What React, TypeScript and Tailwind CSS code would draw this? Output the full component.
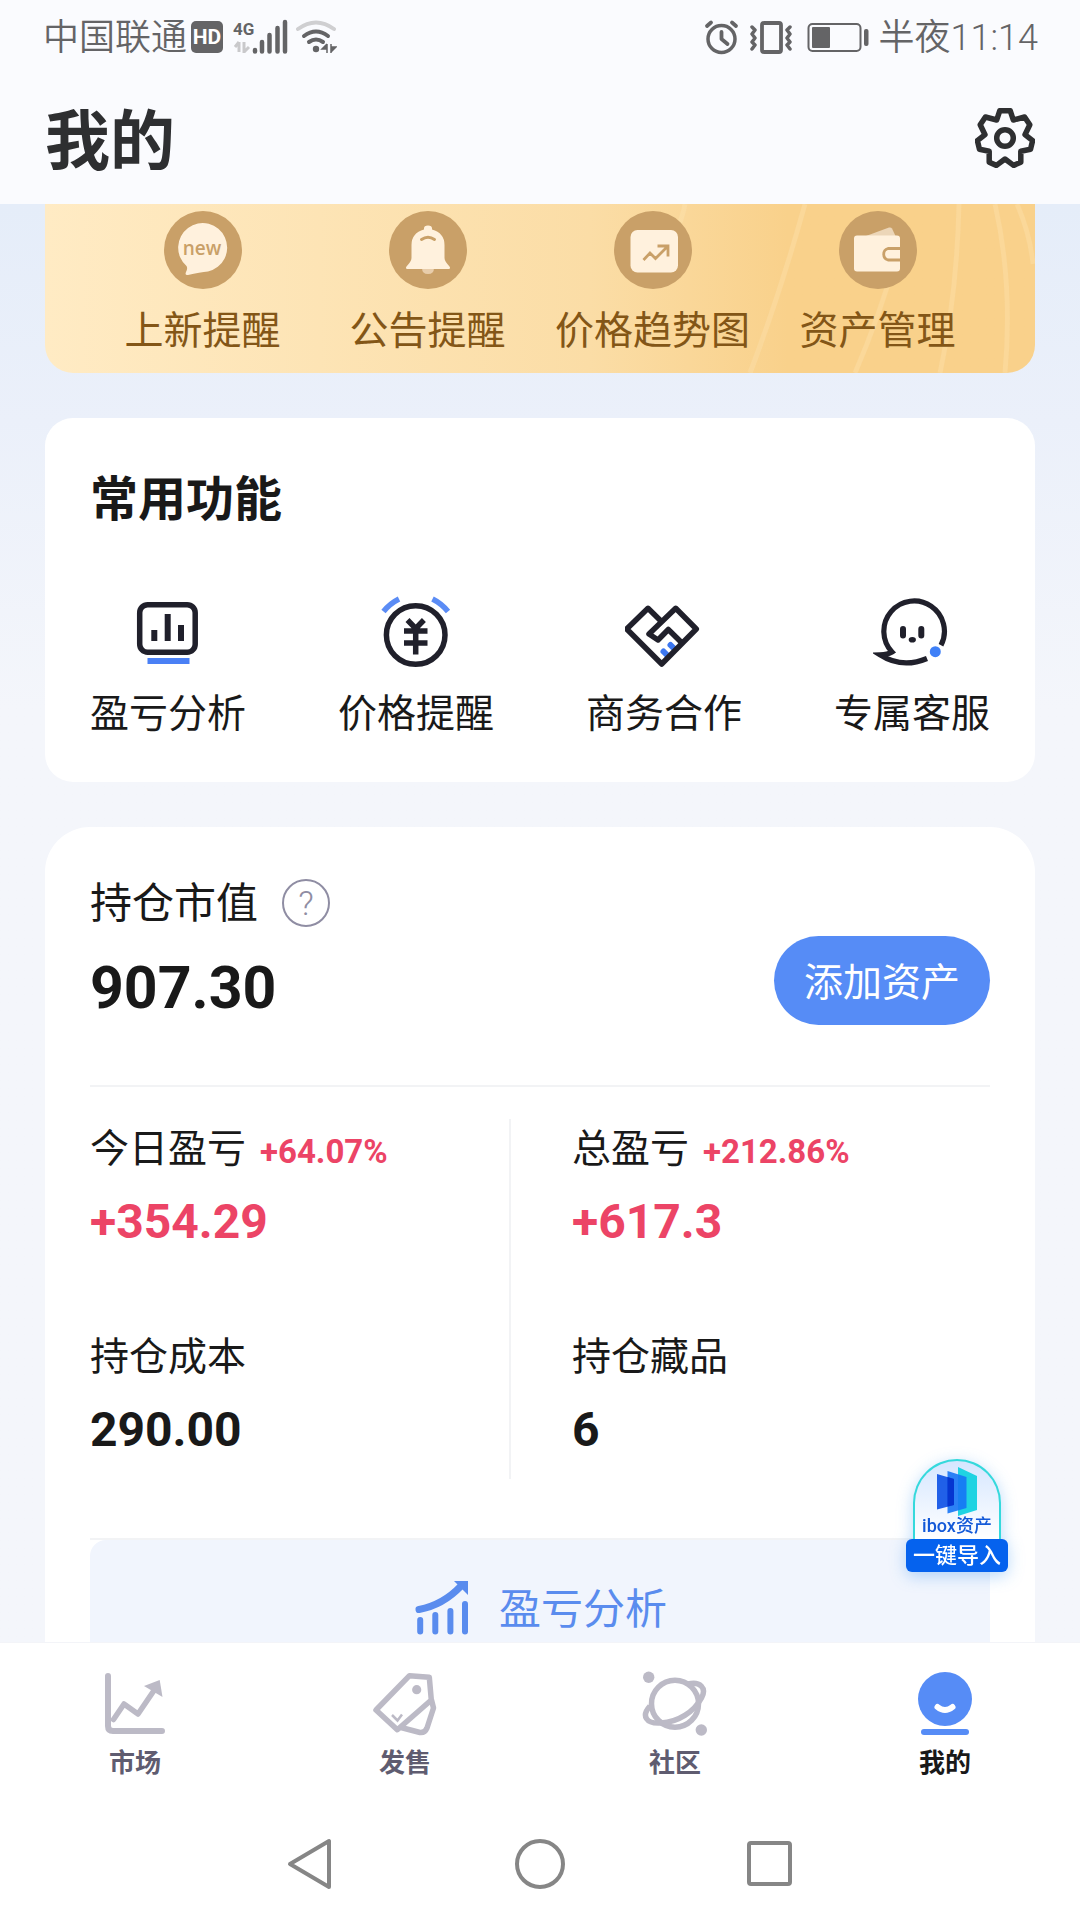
import React from "react";

const Svg = ({ box, className, children }: { box: string; className: string; children: React.ReactNode }) => (
  <svg viewBox={box} className={`shrink-0 ${className}`} fill="none" aria-hidden="true">
    {children}
  </svg>
);

function StatusBar() {
  return (
    <div className="flex h-[74px] items-center justify-between pl-[43px] pr-[42px] text-[36px] font-[350] text-[#646466]">
      <div className="flex items-center">
        <span className="pt-[2px]">中国联通</span>
        <span className="ml-[4px] flex size-[32px] items-center justify-center rounded-[5px] bg-[#646466] text-[21px] font-bold leading-none text-white">
          HD
        </span>
        <Svg box="233 18 57 36" className="ml-[9px] h-[36px] w-[57px]">
          <text x="234" y="34" fontSize="17" fontWeight="700" fill="#646466">4G</text>
          <path d="M240 41v10M240 41l-4 5M245 41v11M245 51l5-5" stroke="#c9c9cb" strokeWidth="3" />
          <path d="M256 49v1.500M263 41v9.500M270.500 34v16.500M278.500 27v23.500M286 21v29.500" stroke="#646466" strokeWidth="4.500" strokeLinecap="round" />
        </Svg>
        <Svg box="296 18 42 36" className="ml-[6px] h-[36px] w-[42px]">
          <path d="M299 28Q317 15 335 28" stroke="#cfcfd1" strokeWidth="4" strokeLinecap="round" />
          <path d="M305 35Q317 26 329 35M310 41Q317 36 324 41" stroke="#646466" strokeWidth="4" strokeLinecap="round" />
          <circle cx="317" cy="48" r="3.200" fill="#646466" />
          <path d="M328 43v9M328 43l-5 5h5M332 43v9M332 51l5-5h-5" fill="#646466" stroke="#646466" strokeWidth="1.500" />
        </Svg>
      </div>
      <div className="flex items-center">
        <Svg box="702 18 35 36" className="h-[36px] w-[35px]">
          <circle cx="719.500" cy="38" r="13.500" stroke="#646466" strokeWidth="3.500" />
          <path d="M719.500 31v7l6 5M705 25l4-3.500M734 25l-4-3.500" stroke="#646466" strokeWidth="3.800" strokeLinecap="round" strokeLinejoin="round" />
        </Svg>
        <Svg box="746 18 46 36" className="ml-[9px] h-[36px] w-[46px]">
          <rect x="760" y="22" width="19" height="29" rx="2" stroke="#646466" strokeWidth="3.800" />
          <path d="M750 26l3 3-3 4 3 4-3 4 3 3-3 4M788 26l-3 3 3 4-3 4 3 4-3 3 3 4" stroke="#646466" strokeWidth="3.500" strokeLinecap="round" strokeLinejoin="round" />
        </Svg>
        <Svg box="805 20 63 32" className="ml-[13px] h-[32px] w-[63px]">
          <rect x="806.500" y="23" width="52" height="27" rx="4" stroke="#646466" strokeWidth="2" />
          <rect x="810" y="26" width="18" height="21" rx="1" fill="#646466" />
          <rect x="862" y="28" width="4.500" height="17" rx="2" fill="#646466" />
        </Svg>
        <span className="ml-[9px] pt-[2px]">半夜11:14</span>
      </div>
    </div>
  );
}

const VIP = [
  {
    label: "上新提醒",
    art: (
      <>
        <path d="M22.500 55A24.500 24.500 0 1 1 44 60.500Q36 61 24 64Q20.500 64.500 22 61Q24 57.500 22.500 55z" fill="#fff1dd" />
        <text x="38" y="44" textAnchor="middle" fontSize="19" fontWeight="600" fontFamily="Open Sans" fill="#c9a068">new</text>
      </>
    ),
  },
  {
    label: "公告提醒",
    art: (
      <>
        <path d="M33 57h12q0 6-6 6t-6-6z" fill="#e8cdab" />
        <path d="M35 18.500q-.5-4 4-4t4 4Q55.500 22 55.500 34V47q0 3 5 8.500q1.500 2.500-1 2.500H18.500q-2.500 0-1-2.500q5-5.500 5-8.500V34Q22.500 22 35 18.500z" fill="#fff1dd" />
        <path d="M32.500 28.500q6.500-4.500 13 0" stroke="#c9a068" strokeWidth="3" strokeLinecap="round" />
      </>
    ),
  },
  {
    label: "价格趋势图",
    art: (
      <>
        <rect x="16.500" y="19" width="47.500" height="42.500" rx="7" fill="#fff1dd" />
        <path d="M29.500 49l6.500-7 5.500 5.500L54 35M43.500 35H54v10.500" stroke="#c9a068" strokeWidth="2.800" />
      </>
    ),
  },
  {
    label: "资产管理",
    art: (
      <>
        <path d="M27 25L50 16.500q2-.5 3 1L57 26z" fill="#ecd6b8" />
        <rect x="15" y="24.500" width="46" height="36" rx="3" fill="#fff1dd" />
        <path d="M61 37.500H49a6 6 0 0 0 0 11.500H61" stroke="#c9a068" strokeWidth="2.800" />
      </>
    ),
  },
];

const INK = "#20202b";
const FUNCS = [
  {
    label: "盈亏分析",
    box: "129 594 78 78",
    art: (
      <>
        <rect x="139.700" y="604.700" width="55.500" height="47.500" rx="8" stroke={INK} strokeWidth="5.500" />
        <path d="M154.300 630v11M167.700 614v27M181 625v16" stroke={INK} strokeWidth="6" />
        <path d="M147.500 661h42" stroke="#4a80f5" strokeWidth="6" />
      </>
    ),
  },
  {
    label: "价格提醒",
    box: "377 594 78 78",
    art: (
      <>
        <circle cx="415.700" cy="635" r="29.300" stroke={INK} strokeWidth="5.500" />
        <path d="M407.500 620l8.200 8.500 8.200-8.500M415.700 628v26.500M404 631h23.500M404 643h23.500" stroke={INK} strokeWidth="5.500" />
        <path d="M383.500 611.500Q390 603.500 399 599M448 611.500Q441.500 603.500 432.500 599" stroke="#5b8cf5" strokeWidth="5.500" />
      </>
    ),
  },
  {
    label: "商务合作",
    box: "625 594 78 78",
    art: (
      <>
        <path d="M663.500 651.500l4 4M670.500 645l4 4" stroke="#3b76f0" strokeWidth="6" strokeLinecap="round" />
        <path d="M661.700 621.700L648 608.300 626.700 629 661.700 664 696.300 629 675.700 608.300 649 634 658 640 668.300 629.500 681 642" stroke={INK} strokeWidth="5.500" strokeLinejoin="round" />
      </>
    ),
  },
  {
    label: "专属客服",
    box: "873 593 78 78",
    art: (
      <>
        <path d="M941 644.300A30.300 30.300 0 1 0 892 651Q888 653.500 880 653.800Q902 668 927 657.500" stroke={INK} strokeWidth="5.200" />
        <path d="M903 628v6.500M921.300 628v6.500" stroke={INK} strokeWidth="6" strokeLinecap="round" />
        <ellipse cx="912.300" cy="638.700" rx="3.600" ry="2.800" fill={INK} />
        <circle cx="935.300" cy="650.700" r="5.500" fill="#3f80f7" />
      </>
    ),
  },
];

const GREY = "#bcbac6";
const TABS = [
  {
    label: "市场",
    box: "101 1669 68 68",
    art: (
      <>
        <path d="M108 1676v50q0 5 5 5h49" stroke={GREY} strokeWidth="6" strokeLinecap="round" />
        <path d="M113.500 1719.500L124 1704l14 10 17-25" stroke={GREY} strokeWidth="5.500" strokeLinecap="round" strokeLinejoin="round" />
        <path d="M144 1686l15.700-6 2.800 17z" fill={GREY} />
      </>
    ),
  },
  {
    label: "发售",
    box: "371 1669 68 68",
    art: (
      <>
        <path d="M409.500 1675.700l19.800 1.600 2 22.700-34 29.700L376 1710z" stroke={GREY} strokeWidth="5.500" strokeLinejoin="round" />
        <path d="M431.500 1700l2 8-6.500 20q-2 5-7 4.500L401 1727.500" stroke={GREY} strokeWidth="5.500" strokeLinejoin="round" />
        <circle cx="416.700" cy="1689.700" r="4.600" fill={GREY} />
        <path d="M392 1715l5.500 5.500 4.500-6" stroke={GREY} strokeWidth="2.500" />
      </>
    ),
  },
  {
    label: "社区",
    box: "641 1669 68 68",
    art: (
      <>
        <circle cx="675" cy="1703.700" r="23.500" stroke={GREY} strokeWidth="5.500" />
        <path d="M688 1684C700 1681 707 1688 701.500 1698C694 1712 678 1722 661 1723C646 1724 641 1716 650 1706" stroke={GREY} strokeWidth="5.500" />
        <circle cx="648.700" cy="1677.300" r="5.700" fill={GREY} />
        <circle cx="701.300" cy="1730" r="5.700" fill={GREY} />
      </>
    ),
  },
  {
    label: "我的",
    box: "911 1669 68 68",
    active: true,
    art: (
      <>
        <circle cx="945" cy="1699" r="27" fill="#568cf6" />
        <path d="M937.500 1707q7.500 6 15 0" stroke="#fff" strokeWidth="6" strokeLinecap="round" />
        <rect x="921" y="1729" width="48" height="6" rx="3" fill="#568cf6" />
      </>
    ),
  },
];

function Stat({ label, value, rate }: { label: string; value: string; rate?: string }) {
  return (
    <div>
      <div className="flex h-[56px] items-center gap-[14px] pt-[4px]">
        <span className="text-[39px] leading-[56px]">{label}</span>
        {rate && <span className="pt-1 text-[33px] font-bold leading-none text-[#ec4466]">{rate}</span>}
      </div>
      <div className={`mt-[19px] text-[48px] font-bold leading-[56px] ${rate ? "text-[#ec4466]" : ""}`}>{value}</div>
    </div>
  );
}

export default function App() {
  return (
    <div className="flex h-screen flex-col bg-[#f4f6fb] font-['Roboto','Noto_Sans_CJK_SC',sans-serif] text-[#191919]">
      <header className="shrink-0 bg-[#fafbfe]">
        <StatusBar />
        <div className="flex h-[130px] items-center justify-between px-[45px] pb-[2px]">
          <h1 className="pt-[8px] text-[65px] font-bold leading-none text-[#2e2f31]">我的</h1>
          <button aria-label="设置" className="flex">
            <Svg box="0 0 60 60" className="size-[60px]">
              <path
                d="M24.800 2.700H35.200L38.300 12L49.600 9L54.800 16.700L50 26.700L57.600 32.700L55.500 41.300L45.800 43.300V54.300L38.600 57.400L30 51L21.400 57.400L14.200 54.300V43.300L4.500 41.300L2.400 32.700L10 26.700L5.200 16.700L10.400 9L21.700 12z"
                stroke="#2e2f31"
                strokeWidth="5.500"
                strokeLinejoin="round"
              />
              <circle cx="30" cy="30" r="8.300" stroke="#2e2f31" strokeWidth="5.500" />
            </Svg>
          </button>
        </div>
      </header>

      <main className="min-h-0 flex-1 overflow-hidden bg-linear-to-b from-[#e5edf9] via-[#ebf0fa] via-15% to-[#f4f6fb] to-35% px-[45px]">
        <section className="relative flex h-[169px] overflow-hidden rounded-b-[28px] bg-linear-to-r from-[#ffebc4] via-[#fbdda6] via-55% to-[#f9d18b] to-75% px-[45px] pt-[7px]">
          <svg viewBox="0 0 990 169" preserveAspectRatio="none" className="absolute inset-0 size-full" fill="none" stroke="#fde6b8" strokeWidth="5" opacity="0.3" aria-hidden="true">
            <path d="M640 0Q635 30 600 80M760 0Q735 90 705 169M860 20Q840 100 810 169M914 0Q912 90 895 169M950 0Q968 80 960 169M972 0Q985 30 988 60" />
          </svg>
          {VIP.map((v) => (
            <button key={v.label} className="relative flex flex-1 flex-col items-center whitespace-nowrap">
              <Svg box="0 0 78 78" className="size-[78px]">
                <circle cx="39" cy="39" r="39" fill="#c9a068" />
                {v.art}
              </Svg>
              <span className="mt-[14px] text-[39px] leading-[56px] text-[#835617]">{v.label}</span>
            </button>
          ))}
        </section>

        <section className="mt-[45px] h-[364px] rounded-[28px] bg-white px-[45px] pt-[48px]">
          <h2 className="text-[48px] font-bold leading-[68px]">常用功能</h2>
          <div className="mt-[60px] flex justify-between">
            {FUNCS.map((f) => (
              <button key={f.label} className="flex flex-col items-center">
                <Svg box={f.box} className="size-[78px]">{f.art}</Svg>
                <span className="mt-[14px] text-[39px] leading-[56px]">{f.label}</span>
              </button>
            ))}
          </div>
        </section>

        <section className="mt-[45px] rounded-t-[45px] bg-white px-[45px] pt-[45px]">
          <div className="flex items-center justify-between border-b-2 border-[#f2f3f5] pb-[59px]">
            <div>
              <div className="flex items-center gap-6">
                <h2 className="pt-[2px] text-[42px] leading-[60px]">持仓市值</h2>
                <button aria-label="持仓市值说明" className="flex size-[48px] items-center justify-center rounded-full border-2 border-[#8f8da3] text-[34px] font-light leading-none text-[#8f8da3]">
                  ?
                </button>
              </div>
              <div className="mt-[16px] text-[59px] font-bold leading-[76px]">907.30</div>
            </div>
            <button className="mt-[63px] h-[89px] w-[216px] rounded-full bg-[#568cf6] pt-[6px] text-[39px] text-white">添加资产</button>
          </div>

          <div className="mt-[32px] flex h-[360px]">
            <div className="flex w-[421px] flex-col gap-[77px] border-r-2 border-[#f2f3f5]">
              <Stat label="今日盈亏" value="+354.29" rate="+64.07%" />
              <Stat label="持仓成本" value="290.00" />
            </div>
            <div className="flex flex-1 flex-col gap-[77px] pl-[61px]">
              <Stat label="总盈亏" value="+617.3" rate="+212.86%" />
              <Stat label="持仓藏品" value="6" />
            </div>
          </div>

          <div className="relative mt-[59px] border-t-2 border-[#f2f3f5]">
            <button className="flex h-[135px] w-full items-center justify-center gap-[28px] rounded-[16px] bg-[#f1f5fd] text-[42px] text-[#5a8cee]">
              <Svg box="414 1580 58 58" className="size-[58px]">
                <path d="M420 1610.500Q444 1606 462 1587" stroke="#5a8cee" strokeWidth="7" strokeLinecap="round" />
                <path d="M455 1582h14v14z" fill="#5a8cee" />
                <path d="M421.200 1621v11.500M436.300 1616v16.500M451.400 1612v20.500M466 1605v27.500" stroke="#5a8cee" strokeWidth="6" strokeLinecap="round" />
              </Svg>
              <span className="pt-[4px]">盈亏分析</span>
            </button>
            <button className="absolute -right-[18px] -top-[81px] flex w-[102px] flex-col items-center drop-shadow-[0_4px_8px_rgba(20,130,240,0.3)]">
              <span className="flex h-[80px] w-[88px] flex-col items-center rounded-t-full border-2 border-b-0 border-[#35d9dc] bg-linear-to-b from-[#d5e6ff] to-white pt-[5px]">
                <Svg box="936 1466 42 50" className="h-[50px] w-[42px]">
                  <path d="M958 1467l19 9v34l-19 6z" fill="#1fd3e2" />
                  <path d="M947.500 1471l19 6v31l-19 5.500z" fill="#1674f5" fillOpacity="0.9" />
                  <path d="M937 1474l17 5v26l-17 4.500z" fill="#0b50e6" fillOpacity="0.9" />
                  <path d="M947.500 1477l6.500 2v26l-6.500 1.500z" fill="#0535d0" />
                </Svg>
                <span className="whitespace-nowrap text-[18px] font-medium leading-[20px] text-[#1359d8]">ibox资产</span>
              </span>
              <span className="flex h-[33px] w-full items-center justify-center rounded-[6px] bg-[#0562ee] text-[22px] font-medium leading-none text-white">一键导入</span>
            </button>
          </div>
        </section>
      </main>

      <footer className="z-10 shrink-0 border-t border-[#f3f4f8] bg-white">
        <nav className="flex h-[147px] pt-[26px]">
          {TABS.map((t) => (
            <a key={t.label} href="#" className={`flex flex-1 flex-col items-center text-[26px] font-bold leading-[36px] ${t.active ? "text-[#191919]" : "text-[#5f5c70]"}`}>
              <Svg box={t.box} className="size-[68px]">{t.art}</Svg>
              <span className="mt-[8px]">{t.label}</span>
            </a>
          ))}
        </nav>
        <div className="flex h-[130px] items-center justify-center gap-[176px] pt-[18px]">
          <button aria-label="返回" className="flex">
            <Svg box="282 1837 54 54" className="size-[54px]">
              <path d="M328 1841v46l-39-23z" stroke="#868686" strokeWidth="4" strokeLinejoin="round" />
            </Svg>
          </button>
          <button aria-label="主页" className="flex">
            <Svg box="513 1837 54 54" className="size-[54px]">
              <circle cx="540" cy="1864" r="23" stroke="#868686" strokeWidth="4" />
            </Svg>
          </button>
          <button aria-label="最近任务" className="flex">
            <Svg box="742 1837 54 54" className="size-[54px]">
              <rect x="748" y="1843" width="41" height="41" rx="2" stroke="#868686" strokeWidth="4" />
            </Svg>
          </button>
        </div>
      </footer>
    </div>
  );
}
